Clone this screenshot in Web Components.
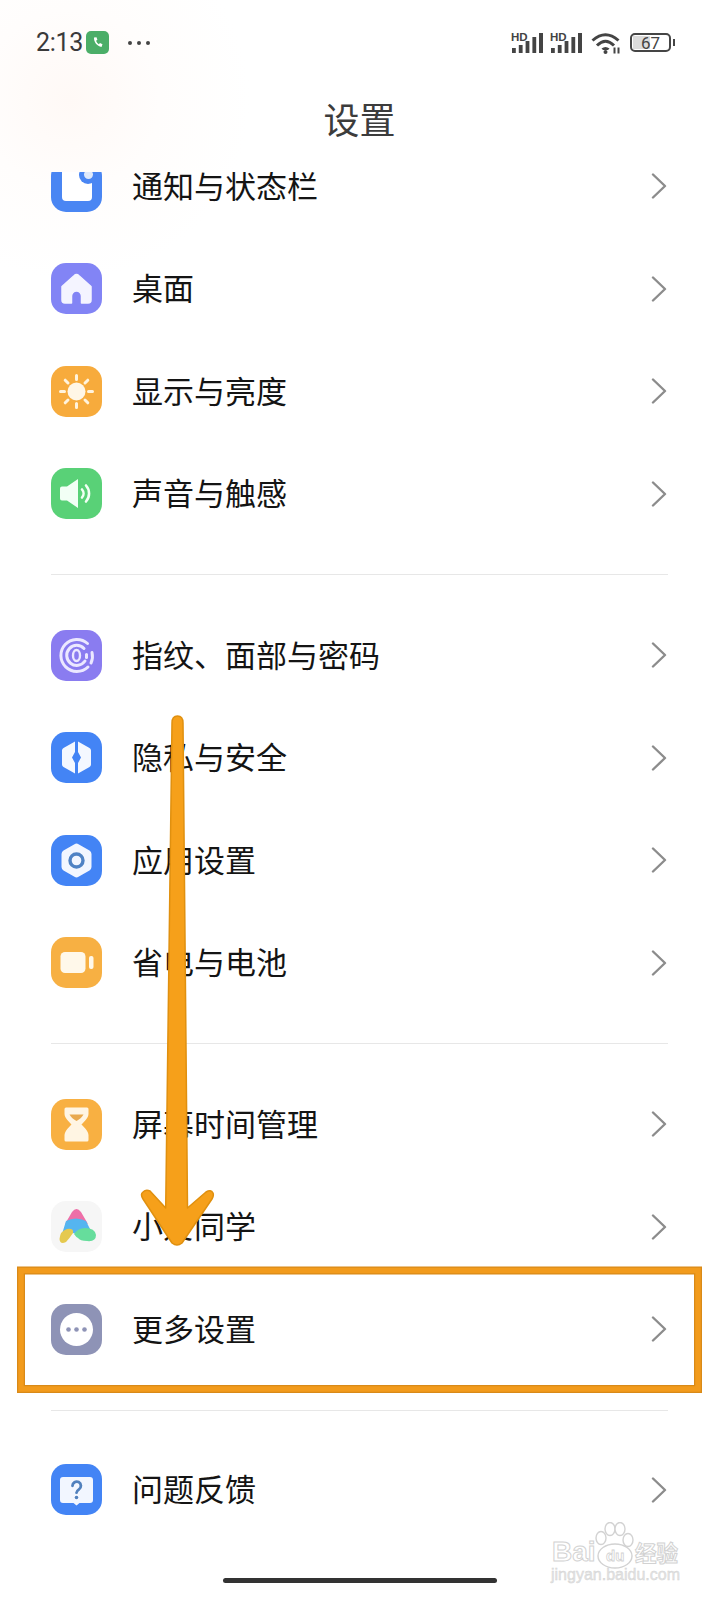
<!DOCTYPE html>
<html lang="zh">
<head>
<meta charset="utf-8">
<style>
    html, body { margin: 0; padding: 0; background: #fff; }
    body { width: 719px; height: 1600px; overflow: hidden; font-family: 'Noto Sans CJK SC', 'Noto Sans', sans-serif; }
    svg { display: block; }
</style>
</head>
<body>
<settings-screen>
    <status-bar slot="status"></status-bar>
    <title-bar slot="title">设置</title-bar>

    <settings-group>
        <settings-row>
            <app-icon slot="icon" color="#4a86f3">
                <svg viewBox="0 0 51 51" width="51" height="51"><rect x="11" y="5" width="30" height="35" rx="4" fill="#fff"/><circle cx="37" cy="14" r="9" fill="#4a86f3"/><circle cx="37.500" cy="13.500" r="4.500" fill="#dfe9fb"/></svg>
            </app-icon>
            通知与状态栏
        </settings-row>
        <settings-row>
            <app-icon slot="icon" color="#8284f5">
                <svg viewBox="0 0 51 51" width="51" height="51"><path d="M11 23.500 23 12.800a3.600 3.600 0 0 1 5 0L40 23.500V37a3 3 0 0 1-3 3h-6.500v-7a5 5 0 0 0-10 0v7H14a3 3 0 0 1-3-3Z" fill="#f4f4ff" stroke="#f4f4ff" stroke-width="1.500" stroke-linejoin="round"/></svg>
            </app-icon>
            桌面
        </settings-row>
        <settings-row>
            <app-icon slot="icon" color="#f7ab3c">
                <svg viewBox="0 0 51 51" width="51" height="51"><circle cx="25.500" cy="25.500" r="9" fill="#fff6e6"/><g stroke="#fff3dc" stroke-width="3" stroke-linecap="round"><path d="M25.500 9.500v4M25.500 37.500v4M9.500 25.500h4M37.500 25.500h4M14.200 14.200l2.800 2.800M34 34l2.800 2.800M36.800 14.200 34 17M17 34l-2.800 2.800"/></g></svg>
            </app-icon>
            显示与亮度
        </settings-row>
        <settings-row>
            <app-icon slot="icon" color="#59d177">
                <svg viewBox="0 0 51 51" width="51" height="51"><path d="M9 20.500a2 2 0 0 1 2-2h5L27 11v29l-11-7.500h-5a2 2 0 0 1-2-2Z" fill="#f2fff5"/><path d="M31 21.500a6 6 0 0 1 0 8M35 17.500a12 12 0 0 1 0 16" fill="none" stroke="#f2fff5" stroke-width="2.600" stroke-linecap="round"/></svg>
            </app-icon>
            声音与触感
        </settings-row>
    </settings-group>

    <settings-group>
        <settings-row>
            <app-icon slot="icon" color="#8a7cf0">
                <svg viewBox="0 0 51 51" width="51" height="51"><g fill="none" stroke="#ebe8ff" stroke-linecap="round"><path d="M36.500 13.500A16 16 0 1 0 37 37" stroke-width="3"/><path d="M41 22.500a16 16 0 0 1-1 10.500" stroke-width="3"/><path d="M33 18.500A10 10 0 1 0 34 31" stroke-width="3"/><path d="M35.500 24.500v3" stroke-width="3"/><ellipse cx="25.500" cy="25.500" rx="3.500" ry="5.500" stroke-width="2.400"/></g></svg>
            </app-icon>
            指纹、面部与密码
        </settings-row>
        <settings-row>
            <app-icon slot="icon" color="#4384f5">
                <svg viewBox="0 0 51 51" width="51" height="51"><path d="M24 9.500 12.500 16a3 3 0 0 0-1.500 2.500v14a3 3 0 0 0 1.500 2.500L24 41.500V31l-3-5.500 3-5.500Z" fill="#f4f8ff"/><path d="M27 9.500 38.500 16a3 3 0 0 1 1.500 2.500v14a3 3 0 0 1-1.500 2.500L27 41.500V31l3-5.500-3-5.500Z" fill="#f4f8ff"/></svg>
            </app-icon>
            隐私与安全
        </settings-row>
        <settings-row>
            <app-icon slot="icon" color="#4384f5">
                <svg viewBox="0 0 51 51" width="51" height="51"><path d="M23.500 9.200a4 4 0 0 1 4 0l11 6.400a4 4 0 0 1 2 3.400v13a4 4 0 0 1-2 3.400l-11 6.400a4 4 0 0 1-4 0l-11-6.400a4 4 0 0 1-2-3.400V19a4 4 0 0 1 2-3.400Z" fill="#f2f6ff"/><circle cx="25.500" cy="25.500" r="6.500" fill="none" stroke="#4f82c4" stroke-width="3.400"/></svg>
            </app-icon>
            应用设置
        </settings-row>
        <settings-row>
            <app-icon slot="icon" color="#f7b043">
                <svg viewBox="0 0 51 51" width="51" height="51"><rect x="9.500" y="15" width="25" height="21" rx="4.500" fill="#fff8ea"/><rect x="38" y="19" width="4.500" height="13" rx="2" fill="#fff8ea"/></svg>
            </app-icon>
            省电与电池
        </settings-row>
    </settings-group>

    <settings-group>
        <settings-row>
            <app-icon slot="icon" color="#f8b042">
                <svg viewBox="0 0 51 51" width="51" height="51"><path d="M15 10h21v5c0 4-5 7.500-7.500 10.500C31 28.500 36 32 36 36v5H15v-5c0-4 5-7.500 7.500-10.500C20 22.500 15 19 15 15Z" fill="#fff5e3" stroke="#fff5e3" stroke-width="3" stroke-linejoin="round"/><path d="M18.500 15.500h14c-1 2.500-4.500 5-7 6.500-2.500-1.500-6-4-7-6.500Z" fill="#e9a94d"/></svg>
            </app-icon>
            屏幕时间管理
        </settings-row>
        <settings-row>
            <app-icon slot="icon" color="#f6f6f6">
                <svg viewBox="0 0 51 51" width="51" height="51"><path d="M14 23 21 11q4.500-6 9 0L37 23Q25 17 14 23Z" fill="#ee6fa8"/><path d="M15 20q10-5 20 0l4 8-13 5-4-1-11 1Z" fill="#55b5f0"/><path d="M8.500 38q.5-8 7.500-10 7-1 6 4-4 6-7 9-6 3-6.500-3Z" fill="#e5c94f"/><path d="M23 33q4-6 11-6 10 0 11 7 0 7-9 6-7 0-9-3-2-1-4-4Z" fill="#66dd9c"/></svg>
            </app-icon>
            小爱同学
        </settings-row>
        <settings-row>
            <app-icon slot="icon" color="#8e93b6">
                <svg viewBox="0 0 51 51" width="51" height="51"><circle cx="25.500" cy="25.500" r="16.500" fill="#fff"/><g fill="#8e93b6"><circle cx="17.500" cy="25.500" r="2.300"/><circle cx="25.500" cy="25.500" r="2.300"/><circle cx="33.500" cy="25.500" r="2.300"/></g></svg>
            </app-icon>
            更多设置
        </settings-row>
    </settings-group>

    <settings-group>
        <settings-row>
            <app-icon slot="icon" color="#4384f5">
                <svg viewBox="0 0 51 51" width="51" height="51"><path d="M12 13h27a3 3 0 0 1 3 3v20a3 3 0 0 1-3 3h-10.500l-3 2.500-3-2.500H12a3 3 0 0 1-3-3V16a3 3 0 0 1 3-3Z" fill="#f2f6ff"/><path d="M21.500 21.800a4.200 4.200 0 1 1 6.500 3.500c-1.700 1.100-2.500 1.800-2.500 3.400" fill="none" stroke="#5180bd" stroke-width="2.800" stroke-linecap="round"/><circle cx="25.500" cy="33.500" r="1.800" fill="#5180bd"/></svg>
            </app-icon>
            问题反馈
        </settings-row>
    </settings-group>

    <home-bar slot="home"></home-bar>
    <guide-overlay slot="overlay"></guide-overlay>
    <baidu-mark slot="overlay"></baidu-mark>
</settings-screen>

<script>
class SettingsScreen extends HTMLElement {
    connectedCallback() {
        this.attachShadow({ mode: 'open' }).innerHTML = `
<style>
    :host {
        display: flex;
        flex-direction: column;
        position: relative;
        width: 719px;
        height: 1600px;
        overflow: hidden;
        background: radial-gradient(circle at 70px 100px, #fff9f6 0, #fffdfc 90px, #fff 180px);
    }
    .list {
        flex: 1;
        min-height: 0;
        overflow: hidden;
        display: flex;
        flex-direction: column;
    }
    .scroll { margin-top: -37px; }
</style>
<slot name="status"></slot>
<slot name="title"></slot>
<div class="list"><div class="scroll"><slot></slot></div></div>
<slot name="home"></slot>
<slot name="overlay"></slot>`;
    }
}

class StatusBar extends HTMLElement {
    connectedCallback() {
        const hd = `<svg width="33" height="22" viewBox="0 0 33 22"><text x="0" y="8.500" font-family="Liberation Sans, sans-serif" font-weight="700" font-size="11.500" fill="#444">HD</text><g fill="#444"><rect x="1" y="16" width="3.800" height="5"/><rect x="7.800" y="13" width="3.800" height="8"/><rect x="14.600" y="9" width="3.800" height="12"/><rect x="21.400" y="5" width="3.800" height="16"/><rect x="28" y="1" width="4" height="20"/></g></svg>`;
        this.attachShadow({ mode: 'open' }).innerHTML = `
<style>
    :host {
        display: flex;
        align-items: center;
        height: 84px;
        padding: 1px 44px 0 36px;
        box-sizing: border-box;
        color: #3a3a3a;
    }
    .time { font: 400 25px Roboto, 'Liberation Sans', sans-serif; letter-spacing: -0.3px; margin-right: 3px; }
    .call { width: 23px; height: 23px; border-radius: 5px; background: #4bae68; }
    .dots { display: flex; gap: 5px; margin-left: 19px; }
    .dots i { width: 4px; height: 4px; border-radius: 50%; background: #444; }
    .right { margin-left: auto; display: flex; align-items: center; gap: 6px; }
    .wifi { margin: 0 3px 0 2px; }
    .battery { display: flex; align-items: center; gap: 2px; }
    .cell {
        position: relative;
        width: 37px;
        height: 15px;
        border: 2px solid #454545;
        border-radius: 5px;
        overflow: hidden;
        display: flex;
        align-items: center;
        justify-content: center;
        font: 400 17px Roboto, 'Liberation Sans', sans-serif;
        color: #444;
    }
    .cell::before { content: ''; position: absolute; left: 1px; top: 1px; bottom: 1px; width: 47%; background: #dcdcdc; }
    .cell span { position: relative; }
    .tip { width: 2px; height: 7px; background: #454545; }
</style>
<span class="time">2:13</span>
<span class="call"><svg viewBox="0 0 23 23" width="23" height="23"><path d="M8 6.500c-.3 4.500 3 8.700 7.500 9.500l1-2.700-2.500-1.200-1.200 1.100c-1.300-.8-2.200-2-2.700-3.400l1.300-1-.9-2.600Z" fill="#fff"/></svg></span>
<span class="dots"><i></i><i></i><i></i></span>
<span class="right">
    ${hd}${hd}
    <svg class="wifi" width="30" height="22" viewBox="0 0 30 22"><g fill="none" stroke="#444" stroke-width="3"><path d="M1.500 8.500Q14.500-3 27.500 8.500"/><path d="M6 13.500Q14.500 5 23 13.500"/></g><path d="M10.500 16.500q4-3 8 0l-1.500 1.500h-5Z" fill="#444"/><circle cx="14.500" cy="20" r="2" fill="#444"/><path d="M23.500 15.500v6M27.500 15.500v6" stroke="#444" stroke-width="2"/></svg>
    <span class="battery"><span class="cell"><span>67</span></span><span class="tip"></span></span>
</span>`;
    }
}

class TitleBar extends HTMLElement {
    connectedCallback() {
        this.attachShadow({ mode: 'open' }).innerHTML = `
<style>
    :host {
        display: flex;
        justify-content: center;
        align-items: center;
        height: 88px;
        padding-bottom: 21px;
        box-sizing: border-box;
        font-size: 36px;
        color: #3c3c3c;
        position: relative;
        z-index: 1;
    }
</style>
<slot></slot>`;
    }
}

class SettingsGroup extends HTMLElement {
    connectedCallback() {
        this.attachShadow({ mode: 'open' }).innerHTML = `
<style>
    :host { display: block; margin: 0 0 29px; }
    :host(:last-of-type) { margin-top: -1px; }
    :host(:not(:last-of-type))::after {
        content: '';
        display: block;
        height: 1px;
        margin: 29px 51px 0;
        background: #e7e7e7;
    }
</style>
<slot></slot>`;
    }
}

class SettingsRow extends HTMLElement {
    connectedCallback() {
        this.attachShadow({ mode: 'open' }).innerHTML = `
<style>
    :host {
        display: flex;
        align-items: center;
        height: 102.500px;
        padding: 0 52px 0 51px;
        font-size: 31px;
        color: #141414;
    }
    .label { flex: 1; margin-left: 30px; padding-bottom: 4px; }
    svg { display: block; }
</style>
<slot name="icon"></slot>
<span class="label"><slot></slot></span>
<svg width="16" height="26" viewBox="0 0 16 26"><path d="M2 1.500 14 13 2 24.500" fill="none" stroke="#8c8c8c" stroke-width="2.400" stroke-linecap="round" stroke-linejoin="round"/></svg>`;
    }
}

class AppIcon extends HTMLElement {
    connectedCallback() {
        this.attachShadow({ mode: 'open' }).innerHTML = `
<style>
    :host {
        display: block;
        width: 51px;
        height: 51px;
        flex: none;
        border-radius: 15px;
        overflow: hidden;
        background: ${this.getAttribute('color')};
    }
</style>
<slot></slot>`;
    }
}

class HomeBar extends HTMLElement {
    connectedCallback() {
        this.attachShadow({ mode: 'open' }).innerHTML = `
<style>
    :host { display: flex; justify-content: center; align-items: center; height: 21px; flex: none; padding-bottom: 9px; box-sizing: content-box; margin-top: -9px; }
    div { width: 274px; height: 5px; border-radius: 3px; background: #333; }
</style>
<div></div>`;
    }
}

class GuideOverlay extends HTMLElement {
    connectedCallback() {
        this.attachShadow({ mode: 'open' }).innerHTML = `
<style>
    :host { position: absolute; left: 0; top: 0; width: 719px; height: 1600px; pointer-events: none; }
</style>
<svg width="719" height="1600" viewBox="0 0 719 1600">
    <rect x="21" y="1270.500" width="677" height="118.500" fill="none" stroke="#d98a18" stroke-width="8"/>
    <rect x="21" y="1270.500" width="677" height="118.500" fill="none" stroke="#f29b1c" stroke-width="5.500"/>
    <path d="M177.500 716q5.500 0 5.500 7L187.500 1208 206 1192q5-3 7 1 1 3-1 6L182 1243q-5 4-10 0L143 1199q-3-5 0-7 3-3 7-1L165.700 1208 172 723q0-7 5.500-7Z" fill="#f6a01a" stroke="#e0900f" stroke-width="1.500" stroke-linejoin="round"/>
</svg>`;
    }
}

class BaiduMark extends HTMLElement {
    connectedCallback() {
        this.attachShadow({ mode: 'open' }).innerHTML = `
<style>
    :host {
        position: absolute;
        left: 551px;
        top: 1522px;
        width: 130px;
        height: 64px;
        color: #fff;
        pointer-events: none;
    }
    svg { position: absolute; left: 44px; top: 0; }
    span { position: absolute; white-space: nowrap; -webkit-text-stroke: 1px #d2d2d2; }
    .bai { left: 1px; top: 12px; font: 700 28px/36px 'Liberation Sans', sans-serif; }
    .du { left: 55px; top: 25px; font: 700 15px/18px 'Liberation Sans', sans-serif; -webkit-text-stroke-width: .8px; }
    .jy { left: 84px; top: 17px; font: 700 21.500px/26px 'Noto Sans CJK SC', sans-serif; }
    .url { left: 0; top: 43px; font: 400 16px/19px 'Liberation Sans', sans-serif; color: #e4e4e4; -webkit-text-stroke-width: .4px; }
</style>
<svg width="42" height="48" viewBox="0 0 42 48"><g fill="#fff" stroke="#d2d2d2" stroke-width="1.400"><ellipse cx="6" cy="16" rx="5" ry="6.500"/><ellipse cx="15" cy="7" rx="5" ry="6.500"/><ellipse cx="25" cy="7" rx="5" ry="6.500"/><ellipse cx="33" cy="18" rx="5" ry="6.500"/><ellipse cx="20" cy="34" rx="17" ry="12"/></g></svg>
<span class="bai">Bai</span><span class="du">du</span><span class="jy">经验</span><span class="url">jingyan.baidu.com</span>`;
    }
}

customElements.define('settings-screen', SettingsScreen);
customElements.define('status-bar', StatusBar);
customElements.define('title-bar', TitleBar);
customElements.define('settings-group', SettingsGroup);
customElements.define('settings-row', SettingsRow);
customElements.define('app-icon', AppIcon);
customElements.define('home-bar', HomeBar);
customElements.define('guide-overlay', GuideOverlay);
customElements.define('baidu-mark', BaiduMark);
</script>
</body>
</html>
